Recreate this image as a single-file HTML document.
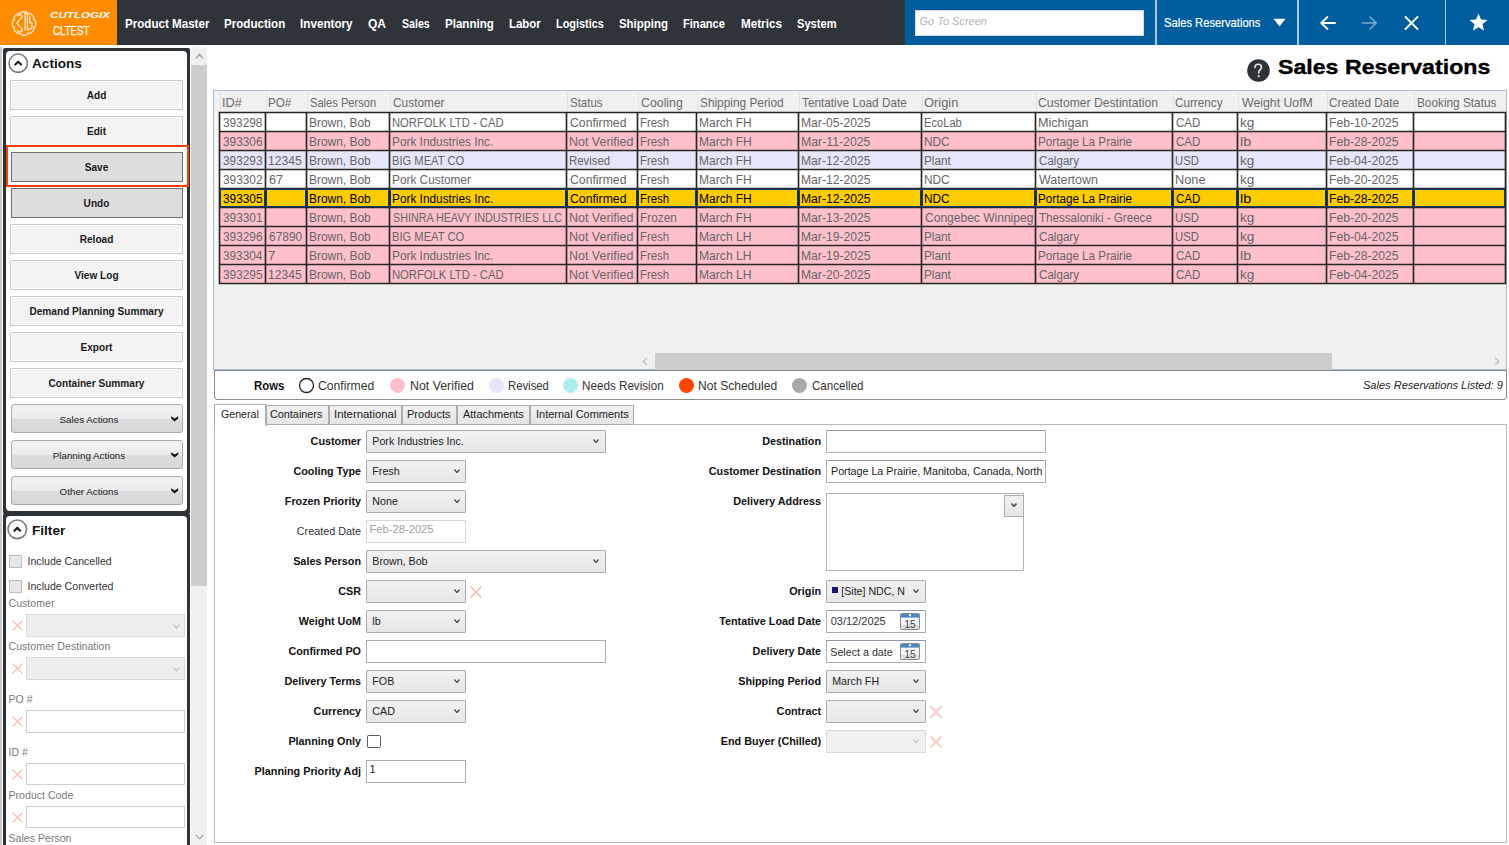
<!DOCTYPE html>
<html><head><meta charset="utf-8"><title>Sales Reservations</title>
<style>
html,body{margin:0;padding:0;}
body{width:1509px;height:845px;overflow:hidden;position:relative;background:#FFFFFF;font-family:"Liberation Sans", sans-serif;}
body>div,body>svg{position:absolute;}
.t{white-space:nowrap;}
</style></head><body>
<div style="left:0px;top:0px;width:117px;height:45px;background:#FF8C00"></div>
<div style="left:117px;top:0px;width:788px;height:45px;background:#2E343A"></div>
<div style="left:905px;top:0px;width:604px;height:45px;background:#005E9F"></div>
<svg style="position:absolute;left:11px;top:10px" width="26" height="27" viewBox="0 0 26 27" fill="none" stroke="#FFE3BF" stroke-width="1.45" stroke-linejoin="round" stroke-linecap="round">
<path d="M16.87 4.17 C18.70 1.48 25.02 7.80 22.33 9.63 C25.53 9.03 25.53 17.97 22.33 17.37 C25.02 19.20 18.70 25.52 16.87 22.83 C17.47 26.03 8.53 26.03 9.13 22.83 C7.30 25.52 0.98 19.20 3.67 17.37 C0.47 17.97 0.47 9.03 3.67 9.63 C0.98 7.80 7.30 1.48 9.13 4.17 C8.53 0.97 17.47 0.97 16.87 4.17 Z"/>
<path d="M7 5.6 C8 4.2 11 4.4 11.2 6.2 C11.3 7.4 10.4 8.2 9 9.4 L6.2 12.8 L6.2 13.6 L9 17 C10.4 18.2 11.3 19 11.2 20.2 C11 22 8 22.2 7 20.8"/>
<path d="M14.2 2.8 L14.2 20 M16.4 2.8 L16.4 20 M14.2 2.8 L16.4 2.8 M18.8 6.6 L18.8 12.8 L20.9 12.8 L20.9 17.8 L17.6 19.8"/>
</svg>
<div class="t" style="left:49.8px;top:11.22px;font-size:8.6px;line-height:8.6px;color:#FFFFFF;font-weight:bold;font-style:italic;letter-spacing:0.1px;transform:scaleX(1.33);transform-origin:left center;">CUTLOGIX</div>
<div class="t" style="left:52.5px;top:24.73px;font-size:12.6px;line-height:12.6px;color:#FFFFFF;transform:scaleX(0.77);transform-origin:left center;-webkit-text-stroke:0.25px #FFFFFF;">CLTEST</div>
<div class="t" style="left:124.67457121551082px;top:17.90px;font-size:12.4px;line-height:12.4px;color:#FFFFFF;font-weight:bold;transform:scaleX(0.936);transform-origin:left center;">Product Master</div>
<div class="t" style="left:224.27417068330024px;top:17.90px;font-size:12.4px;line-height:12.4px;color:#FFFFFF;font-weight:bold;transform:scaleX(0.9366);transform-origin:left center;">Production</div>
<div class="t" style="left:300.2688124794024px;top:17.90px;font-size:12.4px;line-height:12.4px;color:#FFFFFF;font-weight:bold;transform:scaleX(0.9435);transform-origin:left center;">Inventory</div>
<div class="t" style="left:368.22492421690805px;top:17.90px;font-size:12.4px;line-height:12.4px;color:#FFFFFF;font-weight:bold;transform:scaleX(0.9679);transform-origin:left center;">QA</div>
<div class="t" style="left:402.4337979759404px;top:17.90px;font-size:12.4px;line-height:12.4px;color:#FFFFFF;font-weight:bold;transform:scaleX(0.8578);transform-origin:left center;">Sales</div>
<div class="t" style="left:444.9766809728183px;top:17.90px;font-size:12.4px;line-height:12.4px;color:#FFFFFF;font-weight:bold;transform:scaleX(0.9333);transform-origin:left center;">Planning</div>
<div class="t" style="left:508.58503253796096px;top:17.90px;font-size:12.4px;line-height:12.4px;color:#FFFFFF;font-weight:bold;transform:scaleX(0.9225);transform-origin:left center;">Labor</div>
<div class="t" style="left:555.7191024034628px;top:17.90px;font-size:12.4px;line-height:12.4px;color:#FFFFFF;font-weight:bold;transform:scaleX(0.8786);transform-origin:left center;">Logistics</div>
<div class="t" style="left:618.8213122382504px;top:17.90px;font-size:12.4px;line-height:12.4px;color:#FFFFFF;font-weight:bold;transform:scaleX(0.9223);transform-origin:left center;">Shipping</div>
<div class="t" style="left:683.3058201058201px;top:17.90px;font-size:12.4px;line-height:12.4px;color:#FFFFFF;font-weight:bold;transform:scaleX(0.8957);transform-origin:left center;">Finance</div>
<div class="t" style="left:740.5698850574712px;top:17.90px;font-size:12.4px;line-height:12.4px;color:#FFFFFF;font-weight:bold;transform:scaleX(0.9421);transform-origin:left center;">Metrics</div>
<div class="t" style="left:796.8262869967738px;top:17.90px;font-size:12.4px;line-height:12.4px;color:#FFFFFF;font-weight:bold;transform:scaleX(0.8966);transform-origin:left center;">System</div>
<div style="left:915px;top:10px;width:229px;height:26px;background:#FFFFFF;box-sizing:border-box;border:1px solid #D9D9D9"></div>
<div class="t" style="left:919.5px;top:15.89px;font-size:11px;line-height:11px;color:#B4B4B4;font-style:italic;">Go To Screen</div>
<div style="left:1155px;top:0px;width:1.6px;height:45px;background:#A9C8E2"></div>
<div style="left:1297px;top:0px;width:1.6px;height:45px;background:#A9C8E2"></div>
<div style="left:1444.5px;top:0px;width:1.6px;height:45px;background:#A9C8E2"></div>
<div class="t" style="left:1164.249965745604px;top:18.33px;font-size:11.9px;line-height:11.9px;color:#FFFFFF;transform:scaleX(0.9413);transform-origin:left center;-webkit-text-stroke:0.15px #FFFFFF;">Sales Reservations</div>
<svg style="position:absolute;left:1273px;top:18px" width="13" height="10" viewBox="0 0 13 10"><path d="M0.5 0.8 H12.5 L6.5 8.6 Z" fill="#FFFFFF"/></svg>
<svg style="position:absolute;left:1319px;top:15px" width="18" height="16" viewBox="0 0 18 16" fill="none" stroke="#FFFFFF" stroke-width="1.8" stroke-linecap="round" stroke-linejoin="round"><path d="M16 8 H2.5 M8.5 2 L2.2 8 L8.5 14"/></svg>
<svg style="position:absolute;left:1361px;top:15px" width="18" height="16" viewBox="0 0 18 16" fill="none" stroke="#7FA8CC" stroke-width="1.6" stroke-linecap="round" stroke-linejoin="round"><path d="M1.5 8 H15 M9 2 L15.3 8 L9 14"/></svg>
<svg style="position:absolute;left:1403px;top:15px" width="17" height="16" viewBox="0 0 17 16" fill="none" stroke="#FFFFFF" stroke-width="1.8" stroke-linecap="round"><path d="M2.5 2 L14.5 14 M14.5 2 L2.5 14"/></svg>
<svg style="position:absolute;left:1468px;top:12px" width="21" height="21" viewBox="0 0 24 24"><path d="M12 1.8 L14.9 8.6 L22.2 9.2 L16.6 14 L18.3 21.2 L12 17.4 L5.7 21.2 L7.4 14 L1.8 9.2 L9.1 8.6 Z" fill="#FFFFFF"/></svg>
<div style="left:0px;top:47px;width:2px;height:798px;background:#C9C9C9"></div>
<div style="left:3px;top:47.5px;width:187px;height:466px;background:#2D3237;border-radius:2px"></div>
<div style="left:6px;top:50.5px;width:181px;height:460px;background:#FFFFFF;border-radius:4px"></div>
<div style="left:3px;top:513px;width:187px;height:340px;background:#2D3237;border-radius:2px"></div>
<div style="left:6px;top:516px;width:181px;height:340px;background:#FFFFFF;border-radius:4px"></div>
<svg style="position:absolute;left:7.800000000000001px;top:52.7px" width="20.4" height="20.4" viewBox="0 0 20.4 20.4" fill="none" stroke="#7A7A7A" stroke-width="1.6"><circle cx="10.2" cy="10.2" r="9.2"/><path d="M7.299999999999999 11.6 L10.2 8.7 L13.1 11.6" stroke-width="2.1" stroke="#1E1E1E" stroke-linecap="round" stroke-linejoin="round"/></svg>
<div class="t" style="left:32px;top:56.89px;font-size:13.6px;line-height:13.6px;color:#111;font-weight:bold;">Actions</div>
<div style="left:10.4px;top:80px;width:172.2px;height:30.2px;box-sizing:border-box;border:1.4px solid #C8C8C8;border-radius:1px;box-shadow:inset 0 0 0 1px #FCFCFC;background:#F3F3F3"></div>
<div class="t" style="left:11.5px;width:170px;text-align:center;top:91.25px;font-size:10.1px;line-height:10.1px;color:#1A1A1A;font-weight:bold;">Add</div>
<div style="left:10.4px;top:116px;width:172.2px;height:30.2px;box-sizing:border-box;border:1.4px solid #C8C8C8;border-radius:1px;box-shadow:inset 0 0 0 1px #FCFCFC;background:#F3F3F3"></div>
<div class="t" style="left:11.5px;width:170px;text-align:center;top:127.25px;font-size:10.1px;line-height:10.1px;color:#1A1A1A;font-weight:bold;">Edit</div>
<div style="left:10.5px;top:152.2px;width:172px;height:30px;box-sizing:border-box;border:1px solid #707070;background:#DDDDDD"></div>
<div class="t" style="left:11.5px;width:170px;text-align:center;top:163.25px;font-size:10.1px;line-height:10.1px;color:#1A1A1A;font-weight:bold;">Save</div>
<div style="left:10.5px;top:188.4px;width:172px;height:30px;box-sizing:border-box;border:1px solid #707070;background:#DDDDDD"></div>
<div class="t" style="left:11.5px;width:170px;text-align:center;top:199.25px;font-size:10.1px;line-height:10.1px;color:#1A1A1A;font-weight:bold;">Undo</div>
<div style="left:10.4px;top:224px;width:172.2px;height:30.2px;box-sizing:border-box;border:1.4px solid #C8C8C8;border-radius:1px;box-shadow:inset 0 0 0 1px #FCFCFC;background:#F3F3F3"></div>
<div class="t" style="left:11.5px;width:170px;text-align:center;top:235.25px;font-size:10.1px;line-height:10.1px;color:#1A1A1A;font-weight:bold;">Reload</div>
<div style="left:10.4px;top:260px;width:172.2px;height:30.2px;box-sizing:border-box;border:1.4px solid #C8C8C8;border-radius:1px;box-shadow:inset 0 0 0 1px #FCFCFC;background:#F3F3F3"></div>
<div class="t" style="left:11.5px;width:170px;text-align:center;top:271.25px;font-size:10.1px;line-height:10.1px;color:#1A1A1A;font-weight:bold;">View Log</div>
<div style="left:10.4px;top:296px;width:172.2px;height:30.2px;box-sizing:border-box;border:1.4px solid #C8C8C8;border-radius:1px;box-shadow:inset 0 0 0 1px #FCFCFC;background:#F3F3F3"></div>
<div class="t" style="left:11.5px;width:170px;text-align:center;top:307.25px;font-size:10.1px;line-height:10.1px;color:#1A1A1A;font-weight:bold;">Demand Planning Summary</div>
<div style="left:10.4px;top:332px;width:172.2px;height:30.2px;box-sizing:border-box;border:1.4px solid #C8C8C8;border-radius:1px;box-shadow:inset 0 0 0 1px #FCFCFC;background:#F3F3F3"></div>
<div class="t" style="left:11.5px;width:170px;text-align:center;top:343.25px;font-size:10.1px;line-height:10.1px;color:#1A1A1A;font-weight:bold;">Export</div>
<div style="left:10.4px;top:368px;width:172.2px;height:30.2px;box-sizing:border-box;border:1.4px solid #C8C8C8;border-radius:1px;box-shadow:inset 0 0 0 1px #FCFCFC;background:#F3F3F3"></div>
<div class="t" style="left:11.5px;width:170px;text-align:center;top:379.25px;font-size:10.1px;line-height:10.1px;color:#1A1A1A;font-weight:bold;">Container Summary</div>
<div style="left:6px;top:145.3px;width:183px;height:41.7px;box-sizing:border-box;border:2.6px solid #FF3C0A"></div>
<div style="left:10.5px;top:404.4px;width:172px;height:29px;box-sizing:border-box;border:1px solid #ABABAB;border-radius:3px;background:linear-gradient(#F3F3F3 0%,#ECECEC 50%,#DDDDDD 51%,#D8D8D8 100%)"></div>
<div class="t" style="left:14.0px;width:150px;text-align:center;top:415.40px;font-size:9.8px;line-height:9.8px;color:#222;">Sales Actions</div>
<svg style="position:absolute;left:171px;top:415.9px" width="8" height="6" viewBox="0 0 8 6"><path d="M0.2 0.2 L3.7 2.6 L7.2 0.2 L7.2 2.6 L3.7 5.6 L0.2 2.6 Z" fill="#111"/></svg>
<div style="left:10.5px;top:440.4px;width:172px;height:29px;box-sizing:border-box;border:1px solid #ABABAB;border-radius:3px;background:linear-gradient(#F3F3F3 0%,#ECECEC 50%,#DDDDDD 51%,#D8D8D8 100%)"></div>
<div class="t" style="left:14.0px;width:150px;text-align:center;top:451.40px;font-size:9.8px;line-height:9.8px;color:#222;">Planning Actions</div>
<svg style="position:absolute;left:171px;top:451.9px" width="8" height="6" viewBox="0 0 8 6"><path d="M0.2 0.2 L3.7 2.6 L7.2 0.2 L7.2 2.6 L3.7 5.6 L0.2 2.6 Z" fill="#111"/></svg>
<div style="left:10.5px;top:476.4px;width:172px;height:29px;box-sizing:border-box;border:1px solid #ABABAB;border-radius:3px;background:linear-gradient(#F3F3F3 0%,#ECECEC 50%,#DDDDDD 51%,#D8D8D8 100%)"></div>
<div class="t" style="left:14.0px;width:150px;text-align:center;top:487.40px;font-size:9.8px;line-height:9.8px;color:#222;">Other Actions</div>
<svg style="position:absolute;left:171px;top:487.9px" width="8" height="6" viewBox="0 0 8 6"><path d="M0.2 0.2 L3.7 2.6 L7.2 0.2 L7.2 2.6 L3.7 5.6 L0.2 2.6 Z" fill="#111"/></svg>
<svg style="position:absolute;left:7.399999999999999px;top:519.0px" width="20.6" height="20.6" viewBox="0 0 20.6 20.6" fill="none" stroke="#7A7A7A" stroke-width="1.6"><circle cx="10.3" cy="10.3" r="9.3"/><path d="M7.4 11.700000000000001 L10.3 8.8 L13.200000000000001 11.700000000000001" stroke-width="2.1" stroke="#1E1E1E" stroke-linecap="round" stroke-linejoin="round"/></svg>
<div class="t" style="left:32px;top:523.79px;font-size:13.6px;line-height:13.6px;color:#111;font-weight:bold;">Filter</div>
<div style="left:8.5px;top:555px;width:13px;height:13px;box-sizing:border-box;border:1px solid #BDBDBD;background:#E6E6E6"></div>
<div class="t" style="left:27.5px;top:556.03px;font-size:10.6px;line-height:10.6px;color:#333;">Include Cancelled</div>
<div style="left:8.5px;top:580px;width:13px;height:13px;box-sizing:border-box;border:1px solid #BDBDBD;background:#E6E6E6"></div>
<div class="t" style="left:27.5px;top:581.03px;font-size:10.6px;line-height:10.6px;color:#333;">Include Converted</div>
<div class="t" style="left:8.5px;top:597.63px;font-size:10.6px;line-height:10.6px;color:#7A7A7A;">Customer</div>
<svg style="position:absolute;left:11.8px;top:620.1px" width="11" height="11" viewBox="0 0 11 11" fill="none" stroke="#F6C0B8" stroke-width="1.4"><path d="M0.5 0.5 L10.5 10.5 M10.5 0.5 L0.5 10.5"/></svg>
<div style="left:25.7px;top:614.2px;width:159.5px;height:22.5px;box-sizing:border-box;border:1px solid #D9D9D9;background:#EEEEEE"></div>
<svg style="position:absolute;left:173px;top:623.7px" width="7" height="5" viewBox="0 0 7 5"><path d="M0.5 0.5 L3.5 4 L6.5 0.5" fill="none" stroke="#B8B8B8" stroke-width="1.1"/></svg>
<div class="t" style="left:8.5px;top:640.53px;font-size:10.6px;line-height:10.6px;color:#7A7A7A;">Customer Destination</div>
<svg style="position:absolute;left:11.8px;top:663.1px" width="11" height="11" viewBox="0 0 11 11" fill="none" stroke="#F6C0B8" stroke-width="1.4"><path d="M0.5 0.5 L10.5 10.5 M10.5 0.5 L0.5 10.5"/></svg>
<div style="left:25.7px;top:657.2px;width:159.5px;height:22.5px;box-sizing:border-box;border:1px solid #D9D9D9;background:#EEEEEE"></div>
<svg style="position:absolute;left:173px;top:666.7px" width="7" height="5" viewBox="0 0 7 5"><path d="M0.5 0.5 L3.5 4 L6.5 0.5" fill="none" stroke="#B8B8B8" stroke-width="1.1"/></svg>
<div class="t" style="left:8.5px;top:693.63px;font-size:10.6px;line-height:10.6px;color:#7A7A7A;">PO #</div>
<svg style="position:absolute;left:11.8px;top:715.9px" width="11" height="11" viewBox="0 0 11 11" fill="none" stroke="#F6C0B8" stroke-width="1.4"><path d="M0.5 0.5 L10.5 10.5 M10.5 0.5 L0.5 10.5"/></svg>
<div style="left:25.7px;top:710px;width:159.5px;height:22.5px;box-sizing:border-box;border:1px solid #D0D0D0;background:#FFFFFF"></div>
<div class="t" style="left:8.5px;top:746.63px;font-size:10.6px;line-height:10.6px;color:#7A7A7A;">ID #</div>
<svg style="position:absolute;left:11.8px;top:768.5px" width="11" height="11" viewBox="0 0 11 11" fill="none" stroke="#F6C0B8" stroke-width="1.4"><path d="M0.5 0.5 L10.5 10.5 M10.5 0.5 L0.5 10.5"/></svg>
<div style="left:25.7px;top:762.6px;width:159.5px;height:22.5px;box-sizing:border-box;border:1px solid #D0D0D0;background:#FFFFFF"></div>
<div class="t" style="left:8.5px;top:789.63px;font-size:10.6px;line-height:10.6px;color:#7A7A7A;">Product Code</div>
<svg style="position:absolute;left:11.8px;top:811.5px" width="11" height="11" viewBox="0 0 11 11" fill="none" stroke="#F6C0B8" stroke-width="1.4"><path d="M0.5 0.5 L10.5 10.5 M10.5 0.5 L0.5 10.5"/></svg>
<div style="left:25.7px;top:805.6px;width:159.5px;height:22.5px;box-sizing:border-box;border:1px solid #D0D0D0;background:#FFFFFF"></div>
<div class="t" style="left:8.5px;top:832.63px;font-size:10.6px;line-height:10.6px;color:#7A7A7A;">Sales Person</div>
<div style="left:191px;top:47px;width:16px;height:798px;background:#F0F0F0"></div>
<div style="left:191px;top:64.5px;width:16px;height:521px;background:#CDCDCD"></div>
<svg style="position:absolute;left:194.5px;top:53.3px" width="9" height="6.5" viewBox="0 0 9 6.5"><path d="M0.9 5.6 L4.5 1.4 L8.1 5.6" fill="none" stroke="#A3A3A3" stroke-width="1.5"/></svg>
<svg style="position:absolute;left:195px;top:834px" width="9" height="6" viewBox="0 0 9 6"><path d="M0.8 0.8 L4.5 4.8 L8.2 0.8" fill="none" stroke="#9A9A9A" stroke-width="1.1"/></svg>
<svg style="position:absolute;left:1246.5px;top:58.5px" width="23" height="23" viewBox="0 0 23 23"><circle cx="11.5" cy="11.5" r="11.3" fill="#2D3237"/><path d="M7.9 8.6 C7.9 6.4 9.4 5.3 11.2 5.3 C13.1 5.3 14.5 6.5 14.5 8.3 C14.5 10.4 11.8 10.8 11.8 13.2 L11.8 14" fill="none" stroke="#E6E6E6" stroke-width="1.6" stroke-linecap="round"/><circle cx="11.7" cy="17.2" r="1.1" fill="#E6E6E6"/></svg>
<div class="t" style="left:1278.4px;top:58.34px;font-size:19.8px;line-height:19.8px;color:#000;font-weight:bold;transform:scaleX(1.17);transform-origin:left center;-webkit-text-stroke:0.35px #000;">Sales Reservations</div>
<div style="left:213px;top:90px;width:1294px;height:280px;box-sizing:border-box;border:1px solid #A9BDD2;background:#F0F0F0"></div>
<div style="left:219.5px;top:92px;width:1px;height:20px;background:#E2E2E2"></div>
<div style="left:265.5px;top:92px;width:1px;height:20px;background:#E2E2E2"></div>
<div style="left:306.5px;top:92px;width:1px;height:20px;background:#E2E2E2"></div>
<div style="left:389.5px;top:92px;width:1px;height:20px;background:#E2E2E2"></div>
<div style="left:566.5px;top:92px;width:1px;height:20px;background:#E2E2E2"></div>
<div style="left:637.5px;top:92px;width:1px;height:20px;background:#E2E2E2"></div>
<div style="left:696.5px;top:92px;width:1px;height:20px;background:#E2E2E2"></div>
<div style="left:798.5px;top:92px;width:1px;height:20px;background:#E2E2E2"></div>
<div style="left:921.5px;top:92px;width:1px;height:20px;background:#E2E2E2"></div>
<div style="left:1035.5px;top:92px;width:1px;height:20px;background:#E2E2E2"></div>
<div style="left:1172.5px;top:92px;width:1px;height:20px;background:#E2E2E2"></div>
<div style="left:1237.5px;top:92px;width:1px;height:20px;background:#E2E2E2"></div>
<div style="left:1326.5px;top:92px;width:1px;height:20px;background:#E2E2E2"></div>
<div style="left:1413.5px;top:92px;width:1px;height:20px;background:#E2E2E2"></div>
<div style="left:214.5px;top:92px;width:5px;height:20px;background:#F0F0F0"></div>
<div class="t" style="left:222.4px;top:97.27px;font-size:12.2px;line-height:12.2px;color:#6A6A6A;transform:scaleX(1.0492);transform-origin:left center;">ID#</div>
<div class="t" style="left:268.4928878764869px;top:97.27px;font-size:12.2px;line-height:12.2px;color:#6A6A6A;transform:scaleX(0.9517);transform-origin:left center;">PO#</div>
<div class="t" style="left:309.6517913681053px;top:97.27px;font-size:12.2px;line-height:12.2px;color:#6A6A6A;transform:scaleX(0.9133);transform-origin:left center;">Sales Person</div>
<div class="t" style="left:392.94179683046406px;top:97.27px;font-size:12.2px;line-height:12.2px;color:#6A6A6A;transform:scaleX(0.9761);transform-origin:left center;">Customer</div>
<div class="t" style="left:570.3415639309617px;top:97.27px;font-size:12.2px;line-height:12.2px;color:#6A6A6A;transform:scaleX(0.9402);transform-origin:left center;">Status</div>
<div class="t" style="left:640.5212058212059px;top:97.27px;font-size:12.2px;line-height:12.2px;color:#6A6A6A;transform:scaleX(1.0121);transform-origin:left center;">Cooling</div>
<div class="t" style="left:699.9293816959596px;top:97.27px;font-size:12.2px;line-height:12.2px;color:#6A6A6A;transform:scaleX(0.9721);transform-origin:left center;">Shipping Period</div>
<div class="t" style="left:802.0157993591869px;top:97.27px;font-size:12.2px;line-height:12.2px;color:#6A6A6A;transform:scaleX(0.9663);transform-origin:left center;">Tentative Load Date</div>
<div class="t" style="left:923.8968012185834px;top:97.27px;font-size:12.2px;line-height:12.2px;color:#6A6A6A;transform:scaleX(1.0548);transform-origin:left center;">Origin</div>
<div class="t" style="left:1038.4307032418953px;top:97.27px;font-size:12.2px;line-height:12.2px;color:#6A6A6A;transform:scaleX(0.9955);transform-origin:left center;">Customer Destintation</div>
<div class="t" style="left:1175.4505601558694px;top:97.27px;font-size:12.2px;line-height:12.2px;color:#6A6A6A;transform:scaleX(0.9608);transform-origin:left center;">Currency</div>
<div class="t" style="left:1241.6px;top:97.27px;font-size:12.2px;line-height:12.2px;color:#6A6A6A;transform:scaleX(1.0091);transform-origin:left center;">Weight UofM</div>
<div class="t" style="left:1329.2464922512913px;top:97.27px;font-size:12.2px;line-height:12.2px;color:#6A6A6A;transform:scaleX(0.9679);transform-origin:left center;">Created Date</div>
<div class="t" style="left:1416.976741440378px;top:97.27px;font-size:12.2px;line-height:12.2px;color:#6A6A6A;transform:scaleX(0.9687);transform-origin:left center;">Booking Status</div>
<div style="left:214.5px;top:112.5px;width:5px;height:19px;background:#F7F7F7"></div>
<div style="left:220px;top:112px;width:1286px;height:19px;background:#FFFFFF"></div>
<div style="left:214.5px;top:131.5px;width:5px;height:19px;background:#F7F7F7"></div>
<div style="left:220px;top:131px;width:1286px;height:19px;background:#FFC0CB"></div>
<div style="left:214.5px;top:150.5px;width:5px;height:19px;background:#F7F7F7"></div>
<div style="left:220px;top:150px;width:1286px;height:19px;background:#E6E6FA"></div>
<div style="left:214.5px;top:169.5px;width:5px;height:19px;background:#F7F7F7"></div>
<div style="left:220px;top:169px;width:1286px;height:19px;background:#FFFFFF"></div>
<div style="left:214.5px;top:188.5px;width:5px;height:19px;background:#F7F7F7"></div>
<div style="left:220px;top:188px;width:1286px;height:19px;background:#FFCC00"></div>
<div style="left:214.5px;top:207.5px;width:5px;height:19px;background:#F7F7F7"></div>
<div style="left:220px;top:207px;width:1286px;height:19px;background:#FFC0CB"></div>
<div style="left:214.5px;top:226.5px;width:5px;height:19px;background:#F7F7F7"></div>
<div style="left:220px;top:226px;width:1286px;height:19px;background:#FFC0CB"></div>
<div style="left:214.5px;top:245.5px;width:5px;height:19px;background:#F7F7F7"></div>
<div style="left:220px;top:245px;width:1286px;height:19px;background:#FFC0CB"></div>
<div style="left:214.5px;top:264.5px;width:5px;height:19px;background:#F7F7F7"></div>
<div style="left:220px;top:264px;width:1286px;height:19px;background:#FFC0CB"></div>
<svg style="position:absolute;left:200px;top:200px;overflow:visible" width="1" height="1"><path d="M18.7 -87.5 H1306.3 M18.7 -68.5 H1306.3 M18.7 -49.5 H1306.3 M18.7 -30.5 H1306.3 M18.7 -11.5 H1306.3 M18.7 7.5 H1306.3 M18.7 26.5 H1306.3 M18.7 45.5 H1306.3 M18.7 64.5 H1306.3 M18.7 83.5 H1306.3 M19.5 -88.3 V83.8 M65.5 -88.3 V83.8 M106.5 -88.3 V83.8 M189.5 -88.3 V83.8 M366.5 -88.3 V83.8 M437.5 -88.3 V83.8 M496.5 -88.3 V83.8 M598.5 -88.3 V83.8 M721.5 -88.3 V83.8 M835.5 -88.3 V83.8 M972.5 -88.3 V83.8 M1037.5 -88.3 V83.8 M1126.5 -88.3 V83.8 M1213.5 -88.3 V83.8 M1305.5 -88.3 V83.8" stroke="#262626" stroke-width="1.65" fill="none"/></svg>
<div style="left:220px;top:189px;width:45px;height:18px;box-sizing:border-box;border:1px solid #0A3D7C"></div>
<div style="left:266px;top:189px;width:40px;height:18px;box-sizing:border-box;border:1px solid #0A3D7C"></div>
<div style="left:307px;top:189px;width:82px;height:18px;box-sizing:border-box;border:1px solid #0A3D7C"></div>
<div style="left:390px;top:189px;width:176px;height:18px;box-sizing:border-box;border:1px solid #0A3D7C"></div>
<div style="left:567px;top:189px;width:70px;height:18px;box-sizing:border-box;border:1px solid #0A3D7C"></div>
<div style="left:638px;top:189px;width:58px;height:18px;box-sizing:border-box;border:1px solid #0A3D7C"></div>
<div style="left:697px;top:189px;width:101px;height:18px;box-sizing:border-box;border:1px solid #0A3D7C"></div>
<div style="left:799px;top:189px;width:122px;height:18px;box-sizing:border-box;border:1px solid #0A3D7C"></div>
<div style="left:922px;top:189px;width:113px;height:18px;box-sizing:border-box;border:1px solid #0A3D7C"></div>
<div style="left:1036px;top:189px;width:136px;height:18px;box-sizing:border-box;border:1px solid #0A3D7C"></div>
<div style="left:1173px;top:189px;width:64px;height:18px;box-sizing:border-box;border:1px solid #0A3D7C"></div>
<div style="left:1238px;top:189px;width:88px;height:18px;box-sizing:border-box;border:1px solid #0A3D7C"></div>
<div style="left:1327px;top:189px;width:86px;height:18px;box-sizing:border-box;border:1px solid #0A3D7C"></div>
<div style="left:1414px;top:189px;width:91px;height:18px;box-sizing:border-box;border:1px solid #0A3D7C"></div>
<div class="t" style="left:222.73152385225063px;top:117.14px;font-size:12px;line-height:12px;color:#656565;transform:scaleX(0.9826);transform-origin:left center;">393298</div>
<div class="t" style="left:309.16728538283064px;top:117.14px;font-size:12px;line-height:12px;color:#656565;transform:scaleX(0.9949);transform-origin:left center;">Brown, Bob</div>
<div class="t" style="left:392.22194636549085px;top:117.14px;font-size:12px;line-height:12px;color:#656565;transform:scaleX(0.9366);transform-origin:left center;">NORFOLK LTD - CAD</div>
<div class="t" style="left:569.526245127761px;top:117.14px;font-size:12px;line-height:12px;color:#656565;transform:scaleX(1.02);transform-origin:left center;">Confirmed</div>
<div class="t" style="left:640.2096774193549px;top:117.14px;font-size:12px;line-height:12px;color:#656565;transform:scaleX(0.9497);transform-origin:left center;">Fresh</div>
<div class="t" style="left:699.1634957284692px;top:117.14px;font-size:12px;line-height:12px;color:#656565;transform:scaleX(0.9989);transform-origin:left center;">March FH</div>
<div class="t" style="left:801.1524298902631px;top:117.14px;font-size:12px;line-height:12px;color:#656565;transform:scaleX(1.0107);transform-origin:left center;">Mar-05-2025</div>
<div class="t" style="left:924.228748321647px;top:117.14px;font-size:12px;line-height:12px;color:#656565;transform:scaleX(0.9293);transform-origin:left center;">EcoLab</div>
<div class="t" style="left:1038.116285822497px;top:117.14px;font-size:12px;line-height:12px;color:#656565;transform:scaleX(1.0493);transform-origin:left center;">Michigan</div>
<div class="t" style="left:1175.5596102958864px;top:117.14px;font-size:12px;line-height:12px;color:#656565;transform:scaleX(0.9607);transform-origin:left center;">CAD</div>
<div class="t" style="left:1240.2533333333333px;top:117.14px;font-size:12px;line-height:12px;color:#656565;transform:scaleX(1.1289);transform-origin:left center;">kg</div>
<div class="t" style="left:1329.1525949146637px;top:117.14px;font-size:12px;line-height:12px;color:#656565;transform:scaleX(1.0106);transform-origin:left center;">Feb-10-2025</div>
<div class="t" style="left:222.72960969044414px;top:136.14px;font-size:12px;line-height:12px;color:#656565;transform:scaleX(0.9877);transform-origin:left center;">393306</div>
<div class="t" style="left:309.16728538283064px;top:136.14px;font-size:12px;line-height:12px;color:#656565;transform:scaleX(0.9949);transform-origin:left center;">Brown, Bob</div>
<div class="t" style="left:392.1754189944134px;top:136.14px;font-size:12px;line-height:12px;color:#656565;transform:scaleX(0.9862);transform-origin:left center;">Pork Industries Inc.</div>
<div class="t" style="left:569.1271528316524px;top:136.14px;font-size:12px;line-height:12px;color:#656565;transform:scaleX(1.0377);transform-origin:left center;">Not Verified</div>
<div class="t" style="left:640.2096774193549px;top:136.14px;font-size:12px;line-height:12px;color:#656565;transform:scaleX(0.9497);transform-origin:left center;">Fresh</div>
<div class="t" style="left:699.1634957284692px;top:136.14px;font-size:12px;line-height:12px;color:#656565;transform:scaleX(0.9989);transform-origin:left center;">March FH</div>
<div class="t" style="left:801.1397175639894px;top:136.14px;font-size:12px;line-height:12px;color:#656565;transform:scaleX(1.0243);transform-origin:left center;">Mar-11-2025</div>
<div class="t" style="left:924.1756062767475px;top:136.14px;font-size:12px;line-height:12px;color:#656565;transform:scaleX(0.986);transform-origin:left center;">NDC</div>
<div class="t" style="left:1038.1880472208559px;top:136.14px;font-size:12px;line-height:12px;color:#656565;transform:scaleX(0.9727);transform-origin:left center;">Portage La Prairie</div>
<div class="t" style="left:1175.5596102958864px;top:136.14px;font-size:12px;line-height:12px;color:#656565;transform:scaleX(0.9607);transform-origin:left center;">CAD</div>
<div class="t" style="left:1240.2022415039767px;top:136.14px;font-size:12px;line-height:12px;color:#656565;transform:scaleX(1.197);transform-origin:left center;">lb</div>
<div class="t" style="left:1329.1525949146637px;top:136.14px;font-size:12px;line-height:12px;color:#656565;transform:scaleX(1.0106);transform-origin:left center;">Feb-28-2025</div>
<div class="t" style="left:222.72960969044414px;top:155.14px;font-size:12px;line-height:12px;color:#656565;transform:scaleX(0.9877);transform-origin:left center;">393293</div>
<div class="t" style="left:268.3437636761488px;top:155.14px;font-size:12px;line-height:12px;color:#656565;transform:scaleX(1.0083);transform-origin:left center;">12345</div>
<div class="t" style="left:309.16728538283064px;top:155.14px;font-size:12px;line-height:12px;color:#656565;transform:scaleX(0.9949);transform-origin:left center;">Brown, Bob</div>
<div class="t" style="left:392.22789805005374px;top:155.14px;font-size:12px;line-height:12px;color:#656565;transform:scaleX(0.9302);transform-origin:left center;">BIG MEAT CO</div>
<div class="t" style="left:569.2106120157215px;top:155.14px;font-size:12px;line-height:12px;color:#656565;transform:scaleX(0.9487);transform-origin:left center;">Revised</div>
<div class="t" style="left:640.2096774193549px;top:155.14px;font-size:12px;line-height:12px;color:#656565;transform:scaleX(0.9497);transform-origin:left center;">Fresh</div>
<div class="t" style="left:699.1634957284692px;top:155.14px;font-size:12px;line-height:12px;color:#656565;transform:scaleX(0.9989);transform-origin:left center;">March FH</div>
<div class="t" style="left:801.1524298902631px;top:155.14px;font-size:12px;line-height:12px;color:#656565;transform:scaleX(1.0107);transform-origin:left center;">Mar-12-2025</div>
<div class="t" style="left:924.178626799557px;top:155.14px;font-size:12px;line-height:12px;color:#656565;transform:scaleX(0.9828);transform-origin:left center;">Plant</div>
<div class="t" style="left:1038.555250682373px;top:155.14px;font-size:12px;line-height:12px;color:#656565;transform:scaleX(0.9684);transform-origin:left center;">Calgary</div>
<div class="t" style="left:1175.392509090909px;top:155.14px;font-size:12px;line-height:12px;color:#656565;transform:scaleX(0.9433);transform-origin:left center;">USD</div>
<div class="t" style="left:1240.2533333333333px;top:155.14px;font-size:12px;line-height:12px;color:#656565;transform:scaleX(1.1289);transform-origin:left center;">kg</div>
<div class="t" style="left:1329.1525949146637px;top:155.14px;font-size:12px;line-height:12px;color:#656565;transform:scaleX(1.0106);transform-origin:left center;">Feb-04-2025</div>
<div class="t" style="left:222.72960969044414px;top:174.14px;font-size:12px;line-height:12px;color:#656565;transform:scaleX(0.9877);transform-origin:left center;">393302</div>
<div class="t" style="left:268.50543115769415px;top:174.14px;font-size:12px;line-height:12px;color:#656565;transform:scaleX(1.057);transform-origin:left center;">67</div>
<div class="t" style="left:309.16728538283064px;top:174.14px;font-size:12px;line-height:12px;color:#656565;transform:scaleX(0.9949);transform-origin:left center;">Brown, Bob</div>
<div class="t" style="left:392.1758508193075px;top:174.14px;font-size:12px;line-height:12px;color:#656565;transform:scaleX(0.9858);transform-origin:left center;">Pork Customer</div>
<div class="t" style="left:569.526245127761px;top:174.14px;font-size:12px;line-height:12px;color:#656565;transform:scaleX(1.02);transform-origin:left center;">Confirmed</div>
<div class="t" style="left:640.2096774193549px;top:174.14px;font-size:12px;line-height:12px;color:#656565;transform:scaleX(0.9497);transform-origin:left center;">Fresh</div>
<div class="t" style="left:699.1634957284692px;top:174.14px;font-size:12px;line-height:12px;color:#656565;transform:scaleX(0.9989);transform-origin:left center;">March FH</div>
<div class="t" style="left:801.1524298902631px;top:174.14px;font-size:12px;line-height:12px;color:#656565;transform:scaleX(1.0107);transform-origin:left center;">Mar-12-2025</div>
<div class="t" style="left:924.1756062767475px;top:174.14px;font-size:12px;line-height:12px;color:#656565;transform:scaleX(0.986);transform-origin:left center;">NDC</div>
<div class="t" style="left:1039.1px;top:174.14px;font-size:12px;line-height:12px;color:#656565;transform:scaleX(1.0332);transform-origin:left center;">Watertown</div>
<div class="t" style="left:1175.1027938964107px;top:174.14px;font-size:12px;line-height:12px;color:#656565;transform:scaleX(1.0637);transform-origin:left center;">None</div>
<div class="t" style="left:1240.2533333333333px;top:174.14px;font-size:12px;line-height:12px;color:#656565;transform:scaleX(1.1289);transform-origin:left center;">kg</div>
<div class="t" style="left:1329.1525949146637px;top:174.14px;font-size:12px;line-height:12px;color:#656565;transform:scaleX(1.0106);transform-origin:left center;">Feb-20-2025</div>
<div class="t" style="left:222.72960969044414px;top:193.14px;font-size:12px;line-height:12px;color:#000000;transform:scaleX(0.9877);transform-origin:left center;">393305</div>
<div class="t" style="left:309.16728538283064px;top:193.14px;font-size:12px;line-height:12px;color:#000000;transform:scaleX(0.9949);transform-origin:left center;">Brown, Bob</div>
<div class="t" style="left:392.1754189944134px;top:193.14px;font-size:12px;line-height:12px;color:#000000;transform:scaleX(0.9862);transform-origin:left center;">Pork Industries Inc.</div>
<div class="t" style="left:569.526245127761px;top:193.14px;font-size:12px;line-height:12px;color:#000000;transform:scaleX(1.02);transform-origin:left center;">Confirmed</div>
<div class="t" style="left:640.2096774193549px;top:193.14px;font-size:12px;line-height:12px;color:#000000;transform:scaleX(0.9497);transform-origin:left center;">Fresh</div>
<div class="t" style="left:699.1634957284692px;top:193.14px;font-size:12px;line-height:12px;color:#000000;transform:scaleX(0.9989);transform-origin:left center;">March FH</div>
<div class="t" style="left:801.1524298902631px;top:193.14px;font-size:12px;line-height:12px;color:#000000;transform:scaleX(1.0107);transform-origin:left center;">Mar-12-2025</div>
<div class="t" style="left:924.1756062767475px;top:193.14px;font-size:12px;line-height:12px;color:#000000;transform:scaleX(0.986);transform-origin:left center;">NDC</div>
<div class="t" style="left:1038.1880472208559px;top:193.14px;font-size:12px;line-height:12px;color:#000000;transform:scaleX(0.9727);transform-origin:left center;">Portage La Prairie</div>
<div class="t" style="left:1175.5596102958864px;top:193.14px;font-size:12px;line-height:12px;color:#000000;transform:scaleX(0.9607);transform-origin:left center;">CAD</div>
<div class="t" style="left:1240.2022415039767px;top:193.14px;font-size:12px;line-height:12px;color:#000000;transform:scaleX(1.197);transform-origin:left center;">lb</div>
<div class="t" style="left:1329.1525949146637px;top:193.14px;font-size:12px;line-height:12px;color:#000000;transform:scaleX(1.0106);transform-origin:left center;">Feb-28-2025</div>
<div class="t" style="left:222.72960969044414px;top:212.14px;font-size:12px;line-height:12px;color:#656565;transform:scaleX(0.9877);transform-origin:left center;">393301</div>
<div class="t" style="left:309.16728538283064px;top:212.14px;font-size:12px;line-height:12px;color:#656565;transform:scaleX(0.9949);transform-origin:left center;">Brown, Bob</div>
<div class="t" style="left:392.76473450915967px;top:212.14px;font-size:12px;line-height:12px;color:#656565;transform:scaleX(0.894);transform-origin:left center;">SHINRA HEAVY INDUSTRIES LLC</div>
<div class="t" style="left:569.1271528316524px;top:212.14px;font-size:12px;line-height:12px;color:#656565;transform:scaleX(1.0377);transform-origin:left center;">Not Verified</div>
<div class="t" style="left:640.1765699294966px;top:212.14px;font-size:12px;line-height:12px;color:#656565;transform:scaleX(0.985);transform-origin:left center;">Frozen</div>
<div class="t" style="left:699.1634957284692px;top:212.14px;font-size:12px;line-height:12px;color:#656565;transform:scaleX(0.9989);transform-origin:left center;">March FH</div>
<div class="t" style="left:801.1524298902631px;top:212.14px;font-size:12px;line-height:12px;color:#656565;transform:scaleX(1.0107);transform-origin:left center;">Mar-13-2025</div>
<div class="t" style="left:924.5360993802447px;top:212.14px;font-size:12px;line-height:12px;color:#656565;transform:scaleX(1.0025);transform-origin:left center;">Congebec Winnipeg</div>
<div class="t" style="left:1038.9187032922641px;top:212.14px;font-size:12px;line-height:12px;color:#656565;transform:scaleX(0.9669);transform-origin:left center;">Thessaloniki - Greece</div>
<div class="t" style="left:1175.392509090909px;top:212.14px;font-size:12px;line-height:12px;color:#656565;transform:scaleX(0.9433);transform-origin:left center;">USD</div>
<div class="t" style="left:1240.2533333333333px;top:212.14px;font-size:12px;line-height:12px;color:#656565;transform:scaleX(1.1289);transform-origin:left center;">kg</div>
<div class="t" style="left:1329.1525949146637px;top:212.14px;font-size:12px;line-height:12px;color:#656565;transform:scaleX(1.0106);transform-origin:left center;">Feb-20-2025</div>
<div class="t" style="left:222.72960969044414px;top:231.14px;font-size:12px;line-height:12px;color:#656565;transform:scaleX(0.9877);transform-origin:left center;">393296</div>
<div class="t" style="left:268.5393655371305px;top:231.14px;font-size:12px;line-height:12px;color:#656565;transform:scaleX(0.9967);transform-origin:left center;">67890</div>
<div class="t" style="left:309.16728538283064px;top:231.14px;font-size:12px;line-height:12px;color:#656565;transform:scaleX(0.9949);transform-origin:left center;">Brown, Bob</div>
<div class="t" style="left:392.22789805005374px;top:231.14px;font-size:12px;line-height:12px;color:#656565;transform:scaleX(0.9302);transform-origin:left center;">BIG MEAT CO</div>
<div class="t" style="left:569.1271528316524px;top:231.14px;font-size:12px;line-height:12px;color:#656565;transform:scaleX(1.0377);transform-origin:left center;">Not Verified</div>
<div class="t" style="left:640.2096774193549px;top:231.14px;font-size:12px;line-height:12px;color:#656565;transform:scaleX(0.9497);transform-origin:left center;">Fresh</div>
<div class="t" style="left:699.1549707602339px;top:231.14px;font-size:12px;line-height:12px;color:#656565;transform:scaleX(1.008);transform-origin:left center;">March LH</div>
<div class="t" style="left:801.1524298902631px;top:231.14px;font-size:12px;line-height:12px;color:#656565;transform:scaleX(1.0107);transform-origin:left center;">Mar-19-2025</div>
<div class="t" style="left:924.178626799557px;top:231.14px;font-size:12px;line-height:12px;color:#656565;transform:scaleX(0.9828);transform-origin:left center;">Plant</div>
<div class="t" style="left:1038.555250682373px;top:231.14px;font-size:12px;line-height:12px;color:#656565;transform:scaleX(0.9684);transform-origin:left center;">Calgary</div>
<div class="t" style="left:1175.392509090909px;top:231.14px;font-size:12px;line-height:12px;color:#656565;transform:scaleX(0.9433);transform-origin:left center;">USD</div>
<div class="t" style="left:1240.2533333333333px;top:231.14px;font-size:12px;line-height:12px;color:#656565;transform:scaleX(1.1289);transform-origin:left center;">kg</div>
<div class="t" style="left:1329.1525949146637px;top:231.14px;font-size:12px;line-height:12px;color:#656565;transform:scaleX(1.0106);transform-origin:left center;">Feb-04-2025</div>
<div class="t" style="left:222.73137371632683px;top:250.14px;font-size:12px;line-height:12px;color:#656565;transform:scaleX(0.983);transform-origin:left center;">393304</div>
<div class="t" style="left:268.48px;top:250.14px;font-size:12px;line-height:12px;color:#656565;transform:scaleX(1.1022);transform-origin:left center;">7</div>
<div class="t" style="left:309.16728538283064px;top:250.14px;font-size:12px;line-height:12px;color:#656565;transform:scaleX(0.9949);transform-origin:left center;">Brown, Bob</div>
<div class="t" style="left:392.1754189944134px;top:250.14px;font-size:12px;line-height:12px;color:#656565;transform:scaleX(0.9862);transform-origin:left center;">Pork Industries Inc.</div>
<div class="t" style="left:569.1271528316524px;top:250.14px;font-size:12px;line-height:12px;color:#656565;transform:scaleX(1.0377);transform-origin:left center;">Not Verified</div>
<div class="t" style="left:640.2096774193549px;top:250.14px;font-size:12px;line-height:12px;color:#656565;transform:scaleX(0.9497);transform-origin:left center;">Fresh</div>
<div class="t" style="left:699.1549707602339px;top:250.14px;font-size:12px;line-height:12px;color:#656565;transform:scaleX(1.008);transform-origin:left center;">March LH</div>
<div class="t" style="left:801.1524298902631px;top:250.14px;font-size:12px;line-height:12px;color:#656565;transform:scaleX(1.0107);transform-origin:left center;">Mar-19-2025</div>
<div class="t" style="left:924.178626799557px;top:250.14px;font-size:12px;line-height:12px;color:#656565;transform:scaleX(0.9828);transform-origin:left center;">Plant</div>
<div class="t" style="left:1038.1880472208559px;top:250.14px;font-size:12px;line-height:12px;color:#656565;transform:scaleX(0.9727);transform-origin:left center;">Portage La Prairie</div>
<div class="t" style="left:1175.5596102958864px;top:250.14px;font-size:12px;line-height:12px;color:#656565;transform:scaleX(0.9607);transform-origin:left center;">CAD</div>
<div class="t" style="left:1240.2022415039767px;top:250.14px;font-size:12px;line-height:12px;color:#656565;transform:scaleX(1.197);transform-origin:left center;">lb</div>
<div class="t" style="left:1329.1525949146637px;top:250.14px;font-size:12px;line-height:12px;color:#656565;transform:scaleX(1.0106);transform-origin:left center;">Feb-28-2025</div>
<div class="t" style="left:222.72960969044414px;top:269.14px;font-size:12px;line-height:12px;color:#656565;transform:scaleX(0.9877);transform-origin:left center;">393295</div>
<div class="t" style="left:268.3437636761488px;top:269.14px;font-size:12px;line-height:12px;color:#656565;transform:scaleX(1.0083);transform-origin:left center;">12345</div>
<div class="t" style="left:309.16728538283064px;top:269.14px;font-size:12px;line-height:12px;color:#656565;transform:scaleX(0.9949);transform-origin:left center;">Brown, Bob</div>
<div class="t" style="left:392.22194636549085px;top:269.14px;font-size:12px;line-height:12px;color:#656565;transform:scaleX(0.9366);transform-origin:left center;">NORFOLK LTD - CAD</div>
<div class="t" style="left:569.1271528316524px;top:269.14px;font-size:12px;line-height:12px;color:#656565;transform:scaleX(1.0377);transform-origin:left center;">Not Verified</div>
<div class="t" style="left:640.2096774193549px;top:269.14px;font-size:12px;line-height:12px;color:#656565;transform:scaleX(0.9497);transform-origin:left center;">Fresh</div>
<div class="t" style="left:699.1549707602339px;top:269.14px;font-size:12px;line-height:12px;color:#656565;transform:scaleX(1.008);transform-origin:left center;">March LH</div>
<div class="t" style="left:801.1524298902631px;top:269.14px;font-size:12px;line-height:12px;color:#656565;transform:scaleX(1.0107);transform-origin:left center;">Mar-20-2025</div>
<div class="t" style="left:924.178626799557px;top:269.14px;font-size:12px;line-height:12px;color:#656565;transform:scaleX(0.9828);transform-origin:left center;">Plant</div>
<div class="t" style="left:1038.555250682373px;top:269.14px;font-size:12px;line-height:12px;color:#656565;transform:scaleX(0.9684);transform-origin:left center;">Calgary</div>
<div class="t" style="left:1175.5596102958864px;top:269.14px;font-size:12px;line-height:12px;color:#656565;transform:scaleX(0.9607);transform-origin:left center;">CAD</div>
<div class="t" style="left:1240.2533333333333px;top:269.14px;font-size:12px;line-height:12px;color:#656565;transform:scaleX(1.1289);transform-origin:left center;">kg</div>
<div class="t" style="left:1329.1525949146637px;top:269.14px;font-size:12px;line-height:12px;color:#656565;transform:scaleX(1.0106);transform-origin:left center;">Feb-04-2025</div>
<div style="left:655px;top:353px;width:677px;height:16.5px;background:#CDCDCD"></div>
<svg style="position:absolute;left:642px;top:357px" width="6" height="9" viewBox="0 0 6 9"><path d="M5 0.8 L1 4.5 L5 8.2" fill="none" stroke="#BDBDBD" stroke-width="1.1"/></svg>
<svg style="position:absolute;left:1494px;top:357px" width="6" height="9" viewBox="0 0 6 9"><path d="M1 0.8 L5 4.5 L1 8.2" fill="none" stroke="#BDBDBD" stroke-width="1.1"/></svg>
<div style="left:213.5px;top:369.5px;width:1293.8px;height:30px;box-sizing:border-box;border:1.2px solid #8C8C8C;border-top:none;border-radius:0 0 4px 4px;background:#FFFFFF"></div>
<div style="left:213.5px;top:369.6px;width:1293.5px;height:1.4px;background:#858585"></div>
<div class="t" style="left:254.08821176918684px;top:380.27px;font-size:12.2px;line-height:12.2px;color:#111;font-weight:bold;transform:scaleX(0.9335);transform-origin:left center;">Rows</div>
<svg style="position:absolute;left:297.8px;top:376.5px" width="17" height="17" viewBox="0 0 17 17"><circle cx="8.5" cy="8.5" r="7" fill="none" stroke="#222" stroke-width="1.3"/></svg>
<div class="t" style="left:318.4283239497618px;top:379.67px;font-size:12.2px;line-height:12.2px;color:#333;transform:scaleX(0.9997);transform-origin:left center;">Confirmed</div>
<svg style="position:absolute;left:388.7px;top:376.5px" width="17" height="17" viewBox="0 0 17 17"><circle cx="8.5" cy="8.5" r="7.5" fill="#FFC0CB"/></svg>
<div class="t" style="left:409.533359193173px;top:379.67px;font-size:12.2px;line-height:12.2px;color:#333;transform:scaleX(1.0142);transform-origin:left center;">Not Verified</div>
<svg style="position:absolute;left:487.5px;top:376.5px" width="17" height="17" viewBox="0 0 17 17"><circle cx="8.5" cy="8.5" r="7.5" fill="#E6E6FA"/></svg>
<div class="t" style="left:507.71510387422796px;top:379.67px;font-size:12.2px;line-height:12.2px;color:#333;transform:scaleX(0.9284);transform-origin:left center;">Revised</div>
<svg style="position:absolute;left:562.0px;top:376.5px" width="17" height="17" viewBox="0 0 17 17"><circle cx="8.5" cy="8.5" r="7.5" fill="#AFEEEE"/></svg>
<div class="t" style="left:582.1878589707137px;top:379.67px;font-size:12.2px;line-height:12.2px;color:#333;transform:scaleX(0.957);transform-origin:left center;">Needs Revision</div>
<svg style="position:absolute;left:678.0px;top:376.5px" width="17" height="17" viewBox="0 0 17 17"><circle cx="8.5" cy="8.5" r="7.5" fill="#FF4500"/></svg>
<div class="t" style="left:698.0565349544073px;top:379.67px;font-size:12.2px;line-height:12.2px;color:#333;transform:scaleX(0.9899);transform-origin:left center;">Not Scheduled</div>
<svg style="position:absolute;left:791.3px;top:376.5px" width="17" height="17" viewBox="0 0 17 17"><circle cx="8.5" cy="8.5" r="7.5" fill="#A9A9A9"/></svg>
<div class="t" style="left:811.8561762391818px;top:379.67px;font-size:12.2px;line-height:12.2px;color:#333;transform:scaleX(0.9509);transform-origin:left center;">Cancelled</div>
<div class="t" style="left:1362.7275478690551px;top:379.81px;font-size:11.8px;line-height:11.8px;color:#222;font-style:italic;transform:scaleX(0.9353);transform-origin:left center;">Sales Reservations Listed: 9</div>
<div style="left:214px;top:424px;width:1293px;height:418.5px;box-sizing:border-box;border:1.3px solid #B9B9B9;background:#FFFFFF"></div>
<div style="left:214px;top:403.6px;width:52px;height:22px;box-sizing:border-box;border:1px solid #ACACAC;border-bottom:none;background:#FFFFFF"></div>
<div class="t" style="left:221.15197023387668px;top:408.69px;font-size:11.0px;line-height:11.0px;color:#222;transform:scaleX(0.9659);transform-origin:left center;">General</div>
<div style="left:266px;top:405.3px;width:62.5px;height:19.4px;box-sizing:border-box;border:1px solid #ACACAC;background:linear-gradient(#F0F0F0,#E5E5E5)"></div>
<div class="t" style="left:270.2926108374384px;top:409.39px;font-size:11.0px;line-height:11.0px;color:#222;transform:scaleX(0.984);transform-origin:left center;">Containers</div>
<div style="left:328.5px;top:405.3px;width:73.80000000000001px;height:19.4px;box-sizing:border-box;border:1px solid #ACACAC;background:linear-gradient(#F0F0F0,#E5E5E5)"></div>
<div class="t" style="left:333.9137833652182px;top:409.39px;font-size:11.0px;line-height:11.0px;color:#222;transform:scaleX(1.0312);transform-origin:left center;">International</div>
<div style="left:402.3px;top:405.3px;width:55.0px;height:19.4px;box-sizing:border-box;border:1px solid #ACACAC;background:linear-gradient(#F0F0F0,#E5E5E5)"></div>
<div class="t" style="left:407.3387121404937px;top:409.39px;font-size:11.0px;line-height:11.0px;color:#222;transform:scaleX(1.0022);transform-origin:left center;">Products</div>
<div style="left:457.3px;top:405.3px;width:72.90000000000003px;height:19.4px;box-sizing:border-box;border:1px solid #ACACAC;background:linear-gradient(#F0F0F0,#E5E5E5)"></div>
<div class="t" style="left:463.0px;top:409.39px;font-size:11.0px;line-height:11.0px;color:#222;transform:scaleX(0.9951);transform-origin:left center;">Attachments</div>
<div style="left:530.2px;top:405.3px;width:103.79999999999995px;height:19.4px;box-sizing:border-box;border:1px solid #ACACAC;background:linear-gradient(#F0F0F0,#E5E5E5)"></div>
<div class="t" style="left:535.5427065643848px;top:409.39px;font-size:11.0px;line-height:11.0px;color:#222;transform:scaleX(0.9976);transform-origin:left center;">Internal Comments</div>
<div class="t" style="left:161px;width:200px;text-align:right;top:436.36px;font-size:10.8px;line-height:10.8px;color:#111;font-weight:bold;">Customer</div>
<div style="left:366.3px;top:430.2px;width:239.5px;height:22.5px;box-sizing:border-box;border:1px solid #ACACAC;border-radius:1px;background:linear-gradient(#F2F2F2,#E6E6E6)"></div>
<svg style="position:absolute;left:593.3px;top:438.59999999999997px" width="6" height="4.6" viewBox="0 0 6 4.6"><path d="M0.5 0.5 L3.0 3.6 L5.5 0.5" fill="none" stroke="#444" stroke-width="1.2"/></svg>
<div class="t" style="left:372.3px;top:435.74px;font-size:10.7px;line-height:10.7px;color:#222;">Pork Industries Inc.</div>
<div class="t" style="left:161px;width:200px;text-align:right;top:466.36px;font-size:10.8px;line-height:10.8px;color:#111;font-weight:bold;">Cooling Type</div>
<div style="left:366.3px;top:460.2px;width:100px;height:22.5px;box-sizing:border-box;border:1px solid #ACACAC;border-radius:1px;background:linear-gradient(#F2F2F2,#E6E6E6)"></div>
<svg style="position:absolute;left:453.8px;top:468.59999999999997px" width="6" height="4.6" viewBox="0 0 6 4.6"><path d="M0.5 0.5 L3.0 3.6 L5.5 0.5" fill="none" stroke="#444" stroke-width="1.2"/></svg>
<div class="t" style="left:372.3px;top:465.74px;font-size:10.7px;line-height:10.7px;color:#222;">Fresh</div>
<div class="t" style="left:161px;width:200px;text-align:right;top:496.36px;font-size:10.8px;line-height:10.8px;color:#111;font-weight:bold;">Frozen Priority</div>
<div style="left:366.3px;top:490.2px;width:100px;height:22.5px;box-sizing:border-box;border:1px solid #ACACAC;border-radius:1px;background:linear-gradient(#F2F2F2,#E6E6E6)"></div>
<svg style="position:absolute;left:453.8px;top:498.59999999999997px" width="6" height="4.6" viewBox="0 0 6 4.6"><path d="M0.5 0.5 L3.0 3.6 L5.5 0.5" fill="none" stroke="#444" stroke-width="1.2"/></svg>
<div class="t" style="left:372.3px;top:495.74px;font-size:10.7px;line-height:10.7px;color:#222;">None</div>
<div class="t" style="left:161px;width:200px;text-align:right;top:526.36px;font-size:10.8px;line-height:10.8px;color:#333;">Created Date</div>
<div style="left:366.3px;top:520.2px;width:100px;height:22.5px;box-sizing:border-box;border:1px solid #D5D5D5;background:#FFFFFF"></div>
<div class="t" style="left:369.5px;top:524.22px;font-size:11.2px;line-height:11.2px;color:#A0A0A0;">Feb-28-2025</div>
<div class="t" style="left:161px;width:200px;text-align:right;top:556.36px;font-size:10.8px;line-height:10.8px;color:#111;font-weight:bold;">Sales Person</div>
<div style="left:366.3px;top:550.2px;width:239.5px;height:22.5px;box-sizing:border-box;border:1px solid #ACACAC;border-radius:1px;background:linear-gradient(#F2F2F2,#E6E6E6)"></div>
<svg style="position:absolute;left:593.3px;top:558.6px" width="6" height="4.6" viewBox="0 0 6 4.6"><path d="M0.5 0.5 L3.0 3.6 L5.5 0.5" fill="none" stroke="#444" stroke-width="1.2"/></svg>
<div class="t" style="left:372.3px;top:555.74px;font-size:10.7px;line-height:10.7px;color:#222;">Brown, Bob</div>
<div class="t" style="left:161px;width:200px;text-align:right;top:586.36px;font-size:10.8px;line-height:10.8px;color:#111;font-weight:bold;">CSR</div>
<div style="left:366.3px;top:580.2px;width:100px;height:22.5px;box-sizing:border-box;border:1px solid #ACACAC;border-radius:1px;background:linear-gradient(#F2F2F2,#E6E6E6)"></div>
<svg style="position:absolute;left:453.8px;top:588.6px" width="6" height="4.6" viewBox="0 0 6 4.6"><path d="M0.5 0.5 L3.0 3.6 L5.5 0.5" fill="none" stroke="#444" stroke-width="1.2"/></svg>
<div class="t" style="left:161px;width:200px;text-align:right;top:616.36px;font-size:10.8px;line-height:10.8px;color:#111;font-weight:bold;">Weight UoM</div>
<div style="left:366.3px;top:610.2px;width:100px;height:22.5px;box-sizing:border-box;border:1px solid #ACACAC;border-radius:1px;background:linear-gradient(#F2F2F2,#E6E6E6)"></div>
<svg style="position:absolute;left:453.8px;top:618.6px" width="6" height="4.6" viewBox="0 0 6 4.6"><path d="M0.5 0.5 L3.0 3.6 L5.5 0.5" fill="none" stroke="#444" stroke-width="1.2"/></svg>
<div class="t" style="left:372.3px;top:615.74px;font-size:10.7px;line-height:10.7px;color:#222;">lb</div>
<div class="t" style="left:161px;width:200px;text-align:right;top:646.36px;font-size:10.8px;line-height:10.8px;color:#111;font-weight:bold;">Confirmed PO</div>
<div style="left:366.3px;top:640.2px;width:239.5px;height:22.5px;box-sizing:border-box;border:1px solid #ABADB3;background:#FFFFFF"></div>
<div class="t" style="left:161px;width:200px;text-align:right;top:676.36px;font-size:10.8px;line-height:10.8px;color:#111;font-weight:bold;">Delivery Terms</div>
<div style="left:366.3px;top:670.2px;width:100px;height:22.5px;box-sizing:border-box;border:1px solid #ACACAC;border-radius:1px;background:linear-gradient(#F2F2F2,#E6E6E6)"></div>
<svg style="position:absolute;left:453.8px;top:678.6px" width="6" height="4.6" viewBox="0 0 6 4.6"><path d="M0.5 0.5 L3.0 3.6 L5.5 0.5" fill="none" stroke="#444" stroke-width="1.2"/></svg>
<div class="t" style="left:372.3px;top:675.74px;font-size:10.7px;line-height:10.7px;color:#222;">FOB</div>
<div class="t" style="left:161px;width:200px;text-align:right;top:706.36px;font-size:10.8px;line-height:10.8px;color:#111;font-weight:bold;">Currency</div>
<div style="left:366.3px;top:700.2px;width:100px;height:22.5px;box-sizing:border-box;border:1px solid #ACACAC;border-radius:1px;background:linear-gradient(#F2F2F2,#E6E6E6)"></div>
<svg style="position:absolute;left:453.8px;top:708.6px" width="6" height="4.6" viewBox="0 0 6 4.6"><path d="M0.5 0.5 L3.0 3.6 L5.5 0.5" fill="none" stroke="#444" stroke-width="1.2"/></svg>
<div class="t" style="left:372.3px;top:705.74px;font-size:10.7px;line-height:10.7px;color:#222;">CAD</div>
<div class="t" style="left:161px;width:200px;text-align:right;top:736.36px;font-size:10.8px;line-height:10.8px;color:#111;font-weight:bold;">Planning Only</div>
<div style="left:367px;top:734.7px;width:14px;height:13.5px;box-sizing:border-box;border:1.3px solid #5C5C5C;border-radius:1.5px;background:#FFFFFF"></div>
<div class="t" style="left:161px;width:200px;text-align:right;top:766.36px;font-size:10.8px;line-height:10.8px;color:#111;font-weight:bold;">Planning Priority Adj</div>
<div style="left:366.3px;top:760.2px;width:100px;height:22.5px;box-sizing:border-box;border:1px solid #ABADB3;background:#FFFFFF"></div>
<div class="t" style="left:369.5px;top:764.22px;font-size:11.2px;line-height:11.2px;color:#222;">1</div>
<svg style="position:absolute;left:470.2px;top:585.5px" width="12" height="12" viewBox="0 0 12 12" fill="none" stroke="#F6BDB5" stroke-width="1.5"><path d="M0.5 0.5 L11.5 11.5 M11.5 0.5 L0.5 11.5"/></svg>
<div class="t" style="left:621px;width:200px;text-align:right;top:436.36px;font-size:10.8px;line-height:10.8px;color:#111;font-weight:bold;">Destination</div>
<div style="left:826.2px;top:430.2px;width:220px;height:22.5px;box-sizing:border-box;border:1px solid #ABADB3;border-top-color:#8E9AA6;background:#FFFFFF"></div>
<div class="t" style="left:621px;width:200px;text-align:right;top:466.36px;font-size:10.8px;line-height:10.8px;color:#111;font-weight:bold;">Customer Destination</div>
<div style="left:826.2px;top:460.2px;width:220px;height:22.5px;box-sizing:border-box;border:1px solid #ABADB3;border-top-color:#8E9AA6;background:#FFFFFF"></div>
<div class="t" style="left:831px;top:465.94px;font-size:10.7px;line-height:10.7px;color:#222;">Portage La Prairie, Manitoba, Canada, North</div>
<div class="t" style="left:621px;width:200px;text-align:right;top:496.36px;font-size:10.8px;line-height:10.8px;color:#111;font-weight:bold;">Delivery Address</div>
<div style="left:826.2px;top:493px;width:198px;height:77.5px;box-sizing:border-box;border:1px solid #B4B4B4;border-top-color:#A8ACB4;background:#FFFFFF"></div>
<div style="left:1004.3px;top:495.4px;width:19.5px;height:22px;box-sizing:border-box;border:1px solid #ADADAD;background:linear-gradient(#F0F0F0,#E5E5E5)"></div>
<svg style="position:absolute;left:1011.3px;top:503px" width="6" height="4.4" viewBox="0 0 6 4.4"><path d="M0.5 0.5 L3.0 3.4 L5.5 0.5" fill="none" stroke="#5A5A5A" stroke-width="1.7"/></svg>
<div class="t" style="left:621px;width:200px;text-align:right;top:586.36px;font-size:10.8px;line-height:10.8px;color:#111;font-weight:bold;">Origin</div>
<div style="left:826.2px;top:580.3px;width:99.5px;height:22.5px;box-sizing:border-box;border:1px solid #ACACAC;border-radius:1px;background:linear-gradient(#F2F2F2,#E6E6E6)"></div>
<svg style="position:absolute;left:913.2px;top:588.6999999999999px" width="6" height="4.6" viewBox="0 0 6 4.6"><path d="M0.5 0.5 L3.0 3.6 L5.5 0.5" fill="none" stroke="#444" stroke-width="1.2"/></svg>
<div style="left:832px;top:586.5px;width:6px;height:6px;background:#161670"></div>
<div class="t" style="left:841.3px;top:585.83px;font-size:10.6px;line-height:10.6px;color:#222;">[Site] NDC, N</div>
<div class="t" style="left:621px;width:200px;text-align:right;top:616.36px;font-size:10.8px;line-height:10.8px;color:#111;font-weight:bold;">Tentative Load Date</div>
<div style="left:826.2px;top:610.3px;width:99.5px;height:22.5px;box-sizing:border-box;border:1px solid #ABADB3;border-top-color:#8E9AA6;background:#FFFFFF"></div>
<div class="t" style="left:830.7px;top:616.49px;font-size:11.0px;line-height:11.0px;color:#333;">03/12/2025</div>
<svg style="position:absolute;left:900px;top:613.2px" width="20" height="17" viewBox="0 0 20 17"><rect x="0.5" y="0.5" width="19" height="16" rx="1" fill="#F4F4F4" stroke="#8A8A8A"/><rect x="1" y="1" width="18" height="3.6" fill="#4B87C9"/><rect x="9" y="1.2" width="2" height="2" fill="#FFFFFF"/><rect x="1" y="12" width="18" height="4" fill="#DCDCDC"/><text x="10" y="14.8" font-family="Liberation Sans" font-size="10" fill="#404040" text-anchor="middle">15</text></svg>
<div class="t" style="left:621px;width:200px;text-align:right;top:646.36px;font-size:10.8px;line-height:10.8px;color:#111;font-weight:bold;">Delivery Date</div>
<div style="left:826.2px;top:640.3px;width:99.5px;height:22.5px;box-sizing:border-box;border:1px solid #ABADB3;border-top-color:#8E9AA6;background:#FFFFFF"></div>
<div class="t" style="left:830.3px;top:646.94px;font-size:10.7px;line-height:10.7px;color:#333;">Select a date</div>
<svg style="position:absolute;left:900px;top:643.2px" width="20" height="17" viewBox="0 0 20 17"><rect x="0.5" y="0.5" width="19" height="16" rx="1" fill="#F4F4F4" stroke="#8A8A8A"/><rect x="1" y="1" width="18" height="3.6" fill="#4B87C9"/><rect x="9" y="1.2" width="2" height="2" fill="#FFFFFF"/><rect x="1" y="12" width="18" height="4" fill="#DCDCDC"/><text x="10" y="14.8" font-family="Liberation Sans" font-size="10" fill="#404040" text-anchor="middle">15</text></svg>
<div class="t" style="left:621px;width:200px;text-align:right;top:676.36px;font-size:10.8px;line-height:10.8px;color:#111;font-weight:bold;">Shipping Period</div>
<div style="left:826.2px;top:670.3px;width:99.5px;height:22.5px;box-sizing:border-box;border:1px solid #ACACAC;border-radius:1px;background:linear-gradient(#F2F2F2,#E6E6E6)"></div>
<svg style="position:absolute;left:913.2px;top:678.6999999999999px" width="6" height="4.6" viewBox="0 0 6 4.6"><path d="M0.5 0.5 L3.0 3.6 L5.5 0.5" fill="none" stroke="#444" stroke-width="1.2"/></svg>
<div class="t" style="left:832.2px;top:675.84px;font-size:10.7px;line-height:10.7px;color:#222;">March FH</div>
<div class="t" style="left:621px;width:200px;text-align:right;top:706.36px;font-size:10.8px;line-height:10.8px;color:#111;font-weight:bold;">Contract</div>
<div style="left:826.2px;top:700.3px;width:99.5px;height:22.5px;box-sizing:border-box;border:1px solid #ACACAC;border-radius:1px;background:linear-gradient(#F2F2F2,#E6E6E6)"></div>
<svg style="position:absolute;left:913.2px;top:708.6999999999999px" width="6" height="4.6" viewBox="0 0 6 4.6"><path d="M0.5 0.5 L3.0 3.6 L5.5 0.5" fill="none" stroke="#444" stroke-width="1.2"/></svg>
<svg style="position:absolute;left:930.0px;top:705.5px" width="12" height="12" viewBox="0 0 12 12" fill="none" stroke="#F6BDB5" stroke-width="1.5"><path d="M0.5 0.5 L11.5 11.5 M11.5 0.5 L0.5 11.5"/></svg>
<div class="t" style="left:621px;width:200px;text-align:right;top:736.36px;font-size:10.8px;line-height:10.8px;color:#111;font-weight:bold;">End Buyer (Chilled)</div>
<div style="left:826.2px;top:730.3px;width:99.5px;height:22.5px;box-sizing:border-box;border:1px solid #D9D9D9;background:#F0F0F0"></div>
<svg style="position:absolute;left:913.2px;top:739.0999999999999px" width="6" height="4.6" viewBox="0 0 6 4.6"><path d="M0.5 0.5 L3.0 3.6 L5.5 0.5" fill="none" stroke="#BDBDBD" stroke-width="1.1"/></svg>
<svg style="position:absolute;left:930.0px;top:735.5px" width="12" height="12" viewBox="0 0 12 12" fill="none" stroke="#F6BDB5" stroke-width="1.5"><path d="M0.5 0.5 L11.5 11.5 M11.5 0.5 L0.5 11.5"/></svg>
</body></html>
